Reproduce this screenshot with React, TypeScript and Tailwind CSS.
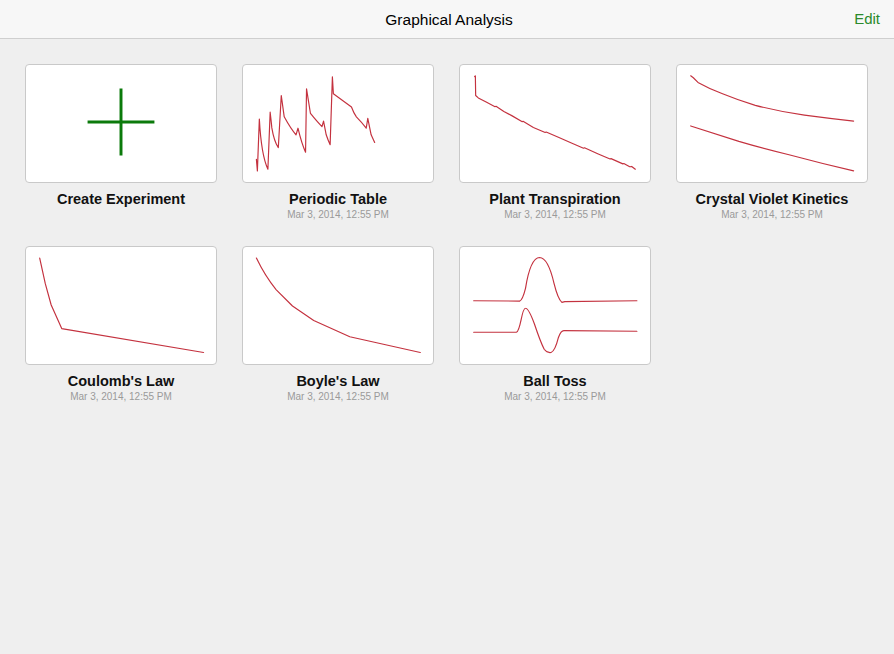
const RED = "#c4323f";

type Item = { title: string; date?: string; chart: React.ReactNode };

function Chart({ children }: { children: React.ReactNode }) {
  return (
    <svg viewBox="0 0 192 119" className="w-full h-full" fill="none">
      {children}
    </svg>
  );
}

function Line({ d }: { d: string }) {
  return <path d={d} stroke={RED} strokeWidth={1.2} strokeLinejoin="round" strokeLinecap="round" />;
}

const items: Item[] = [
  {
    title: "Create Experiment",
    chart: (
      <Chart>
        <path d="M62 58H130M96 24V92" stroke="#0b7a0b" strokeWidth={3} />
      </Chart>
    ),
  },
  {
    title: "Periodic Table",
    date: "Mar 3, 2014, 12:55 PM",
    chart: (
      <Chart>
        <Line d="M13 96L14 107.7L16 55Q18 92 24.7 106L27 48L28 57L28.7 64Q31 78 35.3 84L38.3 31L41.3 52.7Q48 65 53.3 71L55.3 64.3Q59 80 63 88.7L64 24.3L68 49.3Q75 58 79.7 62.7L81.3 57L84 71Q86 77 88 81L90.3 12L91.3 29.3L109.7 42.7Q112 49 114.7 52.7Q120 58 124.7 64.3L126.3 54.3L129.7 71L133.3 78.7" />
      </Chart>
    ),
  },
  {
    title: "Plant Transpiration",
    date: "Mar 3, 2014, 12:55 PM",
    chart: (
      <Chart>
        <Line d="M14.3 11.7L15 11L15.3 31L18 33.5L26 37.7L35 42.4L36 42L44 47.3L52 51.5L62.7 57.7L63.5 57.2L74 63.5L86 68.6L87 68.2L100 73.8L112.7 79.3L125 84.6L126 84.2L140 90.5L152 95.6L153 95.2L165 100.6L166 100.2L172 103.5L174 103.2L177.7 106" />
      </Chart>
    ),
  },
  {
    title: "Crystal Violet Kinetics",
    date: "Mar 3, 2014, 12:55 PM",
    chart: (
      <Chart>
        <Line d="M13.3 11L16 13L20.7 17.7Q32 24 45.7 29.3Q62 36 79 41Q104 47.5 129 51Q155 54.5 179 57" />
        <Line d="M13.3 62Q38 70 62.3 77.7Q87 85 112.3 91Q146 100 179 107.7" />
      </Chart>
    ),
  },
  {
    title: "Coulomb's Law",
    date: "Mar 3, 2014, 12:55 PM",
    chart: (
      <Chart>
        <Line d="M13.3 11.3L19 37.3L25 59L35.7 83L180 107.3" />
      </Chart>
    ),
  },
  {
    title: "Boyle's Law",
    date: "Mar 3, 2014, 12:55 PM",
    chart: (
      <Chart>
        <Line d="M13 11.3Q22 30 33 43.3L49.7 60L71.3 74.7L108 91.3L179.7 107.3" />
      </Chart>
    ),
  },
  {
    title: "Ball Toss",
    date: "Mar 3, 2014, 12:55 PM",
    chart: (
      <Chart>
        <Line d="M13.3 54.7L60 55Q63 54 66 42Q71 11 80.3 10.7Q89 11 95 37Q99 53 103 56.3L106 55.5L179.3 54.7" />
        <Line d="M13.3 86.7L56.7 86.7Q59 86 61.5 74Q64 62 66 62.3Q69 62 75 78Q81 96 85 104Q88 108 92 107.3Q96 106 99.5 92Q102 85 105 85L179.3 85.7" />
      </Chart>
    ),
  },
];

export default function App() {
  return (
    <div
      className="w-[894px] h-[654px] bg-[#efefef] overflow-hidden"
      style={{ fontFamily: '"Liberation Sans", Arial, sans-serif' }}
    >
      <div className="h-[39px] bg-[#f7f7f7] border-b border-[#cfcfcf] flex items-center justify-between px-[14px] pt-px">
        <div className="w-[30px]" />
        <div className="text-[15.5px] text-black">Graphical Analysis</div>
        <div className="text-[15px] text-[#2b8a2b]">Edit</div>
      </div>
      <div className="grid grid-cols-[192px_192px_192px_192px] gap-x-[25px] gap-y-[25px] pl-[25px] pt-[25px]">
        {items.map((it) => (
          <div key={it.title} className="flex flex-col items-center">
            <div className="w-[192px] h-[119px] bg-white border border-[#c9c9c9] rounded-[4px] overflow-hidden">
              {it.chart}
            </div>
            <div className="mt-[7px] text-[14.5px] leading-[18px] font-bold text-[#111] whitespace-nowrap">
              {it.title}
            </div>
            {it.date && (
              <div className="mt-px text-[10px] leading-[12px] text-[#9a9a9a] whitespace-nowrap">{it.date}</div>
            )}
          </div>
        ))}
      </div>
    </div>
  );
}
